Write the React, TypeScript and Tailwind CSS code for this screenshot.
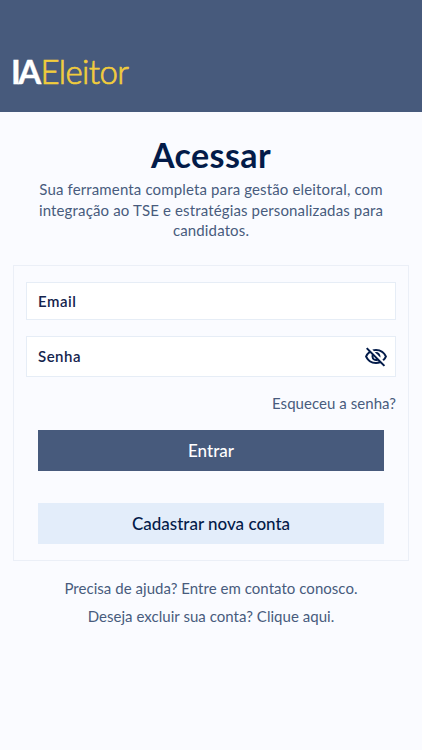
import { useState } from "react";
import { MdOutlineVisibility, MdOutlineVisibilityOff } from "react-icons/md";

const font = "font-[Lato,'Open_Sans',sans-serif]";

function Logo() {
  return (
    <div className="flex items-baseline pl-[11px] font-[Lato,sans-serif] text-[33px] leading-8">
      <span className="w-[29.5px] font-bold tracking-[-2.6px] text-white [-webkit-text-stroke:0.4px_white]">IA</span>
      <span className="font-light tracking-[-0.6px] text-[#f2cd3c] [-webkit-text-stroke:0.7px_#f2cd3c]">Eleitor</span>
    </div>
  );
}

export default function App() {
  const [showPassword, setShowPassword] = useState(false);

  return (
    <div className={`min-h-screen bg-[#fafbff] text-[#485b7d] ${font}`}>
      <header className="flex h-28 items-end bg-[#475a7c] pb-[25px]">
        <Logo />
      </header>

      <main className="flex flex-col px-[13px]">
        <h1 className="mt-[23px] text-center text-[34px] leading-10 font-bold tracking-[0.4px] text-[#031b49]">Acessar</h1>
        <p className="mt-1 text-center text-[15px] leading-[20.5px] tracking-[0.14px]">
          Sua ferramenta completa para gestão eleitoral, com
          <br />
          integração ao TSE e estratégias personalizadas para
          <br />
          candidatos.
        </p>

        <form
          className="mt-6 flex h-[296px] flex-col border border-[#ebeff7] px-3 pt-4"
          onSubmit={(e) => e.preventDefault()}
        >
          <input
            type="email"
            placeholder="Email"
            className="h-[38px] border border-[#e6edf6] bg-white px-[11px] text-[15px] font-semibold tracking-[0.5px] text-[#14244d] outline-none placeholder:text-[#14244d]"
          />
          <div className="mt-4 flex h-[41px] items-center border border-[#e6edf6] bg-white pr-[7px] pl-[11px]">
            <input
              type={showPassword ? "text" : "password"}
              placeholder="Senha"
              className="min-w-0 flex-1 text-[15px] font-semibold tracking-[0.5px] text-[#14244d] outline-none placeholder:text-[#14244d]"
            />
            <button type="button" aria-label="Mostrar senha" className="pt-px" onClick={() => setShowPassword(!showPassword)}>
              {showPassword ? (
                <MdOutlineVisibility className="size-6 text-[#031b49]" />
              ) : (
                <MdOutlineVisibilityOff className="size-6 text-[#031b49]" />
              )}
            </button>
          </div>
          <a href="#" className="mt-4 self-end text-[15px] leading-5 tracking-[0.05px]">
            Esqueceu a senha?
          </a>
          <button type="submit" className="mx-3 mt-[17px] h-[41px] bg-[#475a7c] pt-0.5 text-[17px] font-medium text-white">
            Entrar
          </button>
          <button type="button" className="mx-3 mt-8 h-[41px] bg-[#e3edfa] pt-0.5 text-[17px] font-medium text-[#031b49]">
            Cadastrar nova conta
          </button>
        </form>

        <div className="mt-[17px] flex flex-col items-center gap-2 text-[15px] leading-5 tracking-[0.04px]">
          <a href="#">Precisa de ajuda? Entre em contato conosco.</a>
          <a href="#">Deseja excluir sua conta? Clique aqui.</a>
        </div>
      </main>
    </div>
  );
}
